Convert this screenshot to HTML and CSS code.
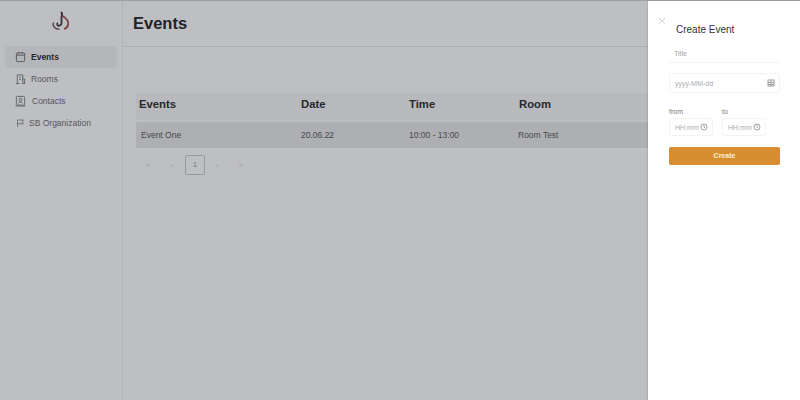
FILE: index.html
```html
<!DOCTYPE html>
<html lang="en">
<head>
    <meta charset="UTF-8">
    <title>Events</title>
    <link rel="stylesheet" href="styles.css">
</head>
<body>

    <div class="app">
        <div class="sidebar">
            <div class="logo">
                <svg width="20" height="20" viewBox="0 0 20 20" fill="none">
                    <path d="M10 1c1.500 1.500 1.500 3 .5 5V12c0 2.500-3 3.500-4 2-.6-.9-.3-1.800.5-2" stroke="#3b3236" stroke-width="1.800"/>
                    <path d="M11.500 5c3.500 2 6.500 5 5.500 9-.5 2-2 3.500-4 4" stroke="#7a3f40" stroke-width="1.800"/>
                    <path d="M2.500 11.500c-1.500 3 1 6.500 6 6.800" stroke="#5c4a4e" stroke-width="1.500"/>
                </svg>
            </div>
            <div class="nav-item active">
                <svg class="nav-icon" viewBox="0 0 12 12" fill="none" stroke="#4a4b4e"><rect x="1.500" y="1.500" width="9" height="9.500" rx="1"/><path d="M1.500 4h9M4 .5v2M8 .5v2"/></svg>
                Events
            </div>
            <div class="nav-item">
                <svg class="nav-icon" viewBox="0 0 12 12" fill="none" stroke="#55565a"><path d="M2.500 11V1.500h6V11M1 11h4M8 11h3M8.500 6h2V11M4.500 4h2M4.500 6.500h2"/></svg>
                Rooms
            </div>
            <div class="nav-item contacts">
                <svg class="nav-icon" viewBox="0 0 12 12" fill="none" stroke="#55565a"><rect x="1.500" y="1" width="9" height="9.500" rx="1"/><circle cx="6" cy="4.500" r="1.500"/><path d="M3.500 8.500c.5-2 4.500-2 5 0M.5 11.500h11"/></svg>
                Contacts
            </div>
            <div class="nav-item">
                <svg class="nav-icon flag" viewBox="0 0 12 12" fill="none" stroke="#55565a"><path d="M2 11V2h8L8 4.500 10 7H2"/></svg>
                SB Organization
            </div>
        </div>

        <div class="main">
            <div class="page-title">Events</div>
            <div class="content">
                <div class="table-head">
                    <div class="col-event">Events</div>
                    <div class="col-date">Date</div>
                    <div class="col-time">Time</div>
                    <div>Room</div>
                </div>
                <div class="table-row">
                    <div class="col-event">Event One</div>
                    <div class="col-date">20.06.22</div>
                    <div class="col-time">10:00 - 13:00</div>
                    <div>Room Test</div>
                </div>
                <div class="pager">
                    <span class="pager-link">«</span>
                    <span class="pager-link">‹</span>
                    <span class="pager-current">1</span>
                    <span class="pager-link">›</span>
                    <span class="pager-link">»</span>
                </div>
            </div>
        </div>
    </div>

    <div class="drawer">
        <svg class="close" viewBox="0 0 8 8" fill="none" stroke="#c8c8c8"><path d="M1 1l6 6M7 1L1 7"/></svg>
        <div class="drawer-title">Create Event</div>
        <div class="title-field">Title</div>
        <div class="input date-input">
            yyyy-MM-dd
            <svg class="input-icon" viewBox="0 0 8 8" fill="none" stroke="#a0a0a0"><rect x="1" y="1" width="6" height="6"/><path d="M1 3.500h6M1 5.500h6M4 1v6"/></svg>
        </div>
        <div class="time-row">
            <div>
                <div class="time-label">from</div>
                <div class="input time-input">
                    HH:mm
                    <svg class="input-icon" viewBox="0 0 8 8" fill="none" stroke="#a0a0a0"><circle cx="4" cy="4" r="3"/><path d="M4 2.200V4l1 .7"/></svg>
                </div>
            </div>
            <div>
                <div class="time-label">to</div>
                <div class="input time-input">
                    HH:mm
                    <svg class="input-icon" viewBox="0 0 8 8" fill="none" stroke="#a0a0a0"><circle cx="4" cy="4" r="3"/><path d="M4 2.200V4l1 .7"/></svg>
                </div>
            </div>
        </div>
        <div class="create-btn">Create</div>
    </div>

</body>
</html>
```

FILE: styles.css
```css
html, body {
    margin: 0;
    padding: 0;
    height: 400px;
    overflow: hidden;
}
body {
    font-family: "Liberation Sans", Arial, sans-serif;
    background-color: #bebfc3;
    color: #2e2f31;
    position: relative;
}
.app {
    display: flex;
    height: 399px;
    border-top: 1px solid #9d9ea1;
}
.sidebar {
    width: 123px;
    flex-shrink: 0;
    border-right: 1px solid #b1b2b6;
    padding: 0 5px;
    box-sizing: border-box;
}
.logo {
    height: 44px;
    padding-top: 10px;
    box-sizing: border-box;
    display: flex;
    justify-content: center;
    padding-right: 1px;
}
.nav-item {
    display: flex;
    align-items: center;
    gap: 5px;
    width: 112px;
    height: 22px;
    padding-left: 10px;
    box-sizing: border-box;
    font-size: 8.500px;
    color: #56575a;
}
.nav-item.active {
    background-color: #b5b6ba;
    border-radius: 4px;
    color: #26272a;
    font-weight: bold;
    margin-top: 1px;
}
.nav-item.contacts {
    gap: 6px;
}
.nav-icon {
    width: 11px;
    height: 12px;
    stroke-width: 0.9;
}
.nav-icon.flag {
    width: 9px;
    margin-right: -1px;
    margin-left: 1px;
}
.main {
    flex: 1;
}
.page-title {
    height: 46px;
    padding: 12px 0 0 10px;
    box-sizing: border-box;
    font-size: 16.500px;
    font-weight: bold;
    line-height: 20px;
    color: #222326;
    border-bottom: 1px solid #aeafb3;
}
.content {
    padding: 46px 0 0 13px;
}
.table-head, .table-row {
    display: flex;
    align-items: center;
    box-sizing: border-box;
    padding-left: 3px;
}
.table-head {
    height: 27px;
    padding-bottom: 5px;
    background-color: #b8b9bd;
    font-size: 11.300px;
    font-weight: bold;
    color: #27282b;
    margin-bottom: 2px;
}
.table-row {
    height: 26px;
    padding-left: 5px;
    background-color: #aeafb3;
    font-size: 8.500px;
    color: #47484b;
    border-radius: 2px 0 0 2px;
}
.col-event { width: 162px; }
.col-date { width: 108px; }
.col-time { width: 110px; }
.table-row .col-event { width: 160px; }
.table-row .col-date { width: 108px; }
.table-row .col-time { width: 109px; }
.pager {
    display: flex;
    align-items: center;
    margin-top: 7px;
    padding-left: 0;
    font-size: 8px;
    color: #a2a3a6;
}
.pager-link {
    width: 24px;
    text-align: center;
}
.pager-current {
    width: 18px;
    height: 18px;
    margin: 0 0 0 1px;
    border: 1px solid #97989b;
    border-radius: 2px;
    text-align: center;
    line-height: 18px;
    color: #77787b;
}
.drawer {
    position: absolute;
    top: 1px;
    right: 0;
    width: 152px;
    height: 399px;
    box-sizing: border-box;
    background-color: white;
    padding: 14px 21px 0 21px;
    box-shadow: -1px 0 1px rgba(0, 0, 0, 0.08);
}
.close {
    position: absolute;
    left: 10px;
    top: 16px;
    width: 8px;
    height: 8px;
    stroke-width: 0.8;
}
.drawer-title {
    font-size: 10px;
    color: #333;
    padding: 9px 0 0 7px;
    height: 25px;
    box-sizing: border-box;
}
.title-field {
    height: 23px;
    padding: 10px 0 0 5px;
    box-sizing: border-box;
    font-size: 7px;
    color: #a5a5a5;
    border-bottom: 1px solid #f3f3f3;
    margin-bottom: 10px;
}
.input {
    display: flex;
    align-items: center;
    justify-content: space-between;
    height: 20px;
    padding: 0 4px 0 5px;
    box-sizing: border-box;
    border: 1px solid #f3f3f3;
    border-radius: 3px;
    font-size: 7px;
    color: #aaa;
}
.date-input {
    width: 111px;
}
.time-row {
    display: flex;
    gap: 9px;
    margin-top: 15px;
}
.time-label {
    font-size: 7px;
    color: #777;
    height: 10px;
}
.time-input {
    width: 44px;
    height: 18px;
}
.input-icon {
    width: 8px;
    height: 8px;
    flex-shrink: 0;
}
.create-btn {
    width: 111px;
    height: 18px;
    margin-top: 11px;
    background-color: #d78e2f;
    border-radius: 2px;
    color: #fbeedd;
    font-size: 7px;
    font-weight: bold;
    text-align: center;
    line-height: 18px;
}
```
